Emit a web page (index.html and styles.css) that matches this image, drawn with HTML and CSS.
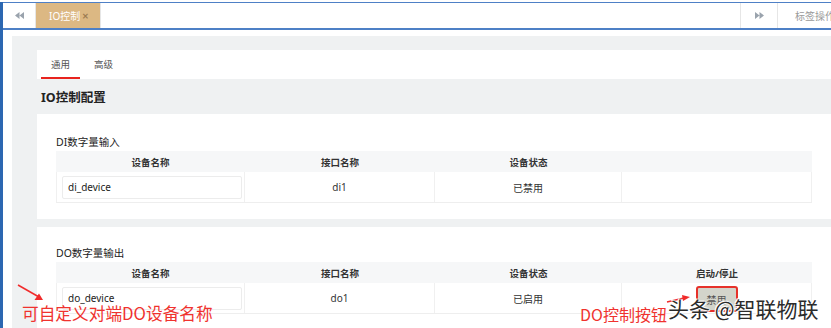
FILE: index.html
```html
<!DOCTYPE html>
<html lang="zh">
<head>
<meta charset="utf-8">
<title>IO控制</title>
<link rel="stylesheet" href="styles.css">
</head>
<body>
<div class="frame">
  <div class="tabbar">
    <div class="nav-btn nav-left">
      <svg width="9" height="7" viewBox="0 0 9 7"><path d="M4.5 0 L0 3.5 L4.5 7 Z M9 0 L4.5 3.5 L9 7 Z" fill="#9aa3ad"/></svg>
    </div>
    <div class="tab-active">IO控制 <span class="close">✕</span></div>
    <div class="tab-fill"></div>
    <div class="nav-btn nav-right">
      <svg width="9" height="7" viewBox="0 0 9 7"><path d="M0 0 L4.5 3.5 L0 7 Z M4.5 0 L9 3.5 L4.5 7 Z" fill="#9aa3ad"/></svg>
    </div>
    <div class="tab-ops">标签操作</div>
  </div>

  <div class="main">
    <div class="subtabs">
      <div class="subtab active">通用</div>
      <div class="subtab">高级</div>
    </div>
    <div class="heading">IO控制配置</div>

    <div class="card card-di">
      <div class="card-title">DI数字量输入</div>
      <div class="table">
        <div class="row head">
          <div class="cell">设备名称</div>
          <div class="cell">接口名称</div>
          <div class="cell">设备状态</div>
          <div class="cell"></div>
        </div>
        <div class="row body">
          <div class="cell"><div class="input">di_device</div></div>
          <div class="cell">di1</div>
          <div class="cell">已禁用</div>
          <div class="cell"></div>
        </div>
      </div>
    </div>

    <div class="card card-do">
      <div class="card-title">DO数字量输出</div>
      <div class="table">
        <div class="row head">
          <div class="cell">设备名称</div>
          <div class="cell">接口名称</div>
          <div class="cell">设备状态</div>
          <div class="cell">启动/停止</div>
        </div>
        <div class="row body">
          <div class="cell"><div class="input">do_device</div></div>
          <div class="cell">do1</div>
          <div class="cell">已启用</div>
          <div class="cell"><div class="btn">禁用</div></div>
        </div>
      </div>
    </div>
  </div>
</div>

<svg class="arrow1" width="30" height="20" viewBox="0 0 30 20"><path d="M1 1 L22 13" stroke="#f02b2b" stroke-width="1.6" fill="none"/><path d="M17.5 16 L26 16 L22 9.5 Z" fill="#f02b2b"/></svg>
<div class="note note1">可自定义对端DO设备名称</div>
<div class="note note2">DO控制按钮</div>
<svg class="arrow2" width="26" height="10" viewBox="0 0 26 10"><path d="M1 8 L18 4" stroke="#f02b2b" stroke-width="1.5" fill="none"/><path d="M16 1 L24 3 L17 7 Z" fill="#f02b2b"/></svg>
<div class="watermark">头条 @智联物联</div>
</body>
</html>
```

FILE: styles.css
```css
* { box-sizing: border-box; }
html, body { margin: 0; padding: 0; }
body {
  width: 831px;
  height: 328px;
  overflow: hidden;
  background: #fff;
  font-family: "Noto Sans", "Noto Sans CJK SC", sans-serif;
  color: #333;
  position: relative;
}
.frame {
  border-left: 3px solid #2c67b1;
  height: 328px;
}
.tabbar {
  margin-top: 2px;
  height: 28px;
  border-top: 1px solid #4e80c6;
  border-bottom: 2px solid #4e80c6;
  display: flex;
  align-items: stretch;
  background: #fff;
  font-size: 10px;
}
.nav-btn {
  display: flex;
  align-items: center;
  justify-content: center;
}
.nav-left { width: 33px; border-right: 1px solid #e6e6e6; }
.nav-right { width: 38px; border-left: 1px solid #e6e6e6; border-right: 1px solid #e6e6e6; }
.tab-active {
  width: 64px;
  background: #dcb883;
  color: #fff;
  display: flex;
  align-items: center;
  padding-left: 13px;
  gap: 2px;
}
.tab-active .close { font-size: 8px; color: #9c7c52; font-weight: bold; }
.tab-fill { flex: 1; border-left: 1px solid #e6e6e6; }
.tab-ops {
  width: 53px;
  color: #9a9a9a;
  padding-left: 17px;
  display: flex;
  align-items: center;
  white-space: nowrap;
  overflow: hidden;
}
.main {
  margin: 6px 0 0 9px;
  background: #eff1f2;
  padding: 14px 0 0 25px;
  height: 300px;
}
.subtabs {
  background: #fff;
  height: 29px;
  display: flex;
  padding-left: 4px;
  font-size: 9.5px;
  color: #555;
}
.subtab {
  width: 39px;
  display: flex;
  align-items: center;
  justify-content: center;
  border-bottom: 2px solid transparent;
  margin-right: 4px;
}
.subtab.active { border-bottom-color: #e8231e; }
.heading {
  height: 35px;
  display: flex;
  align-items: center;
  padding-left: 4px;
  font-size: 12.5px;
  font-weight: bold;
  color: #222;
}
.card {
  background: #fff;
  padding: 0 19px 16px 19px;
}
.card-di { padding-top: 17px; margin-bottom: 8px; }
.card-do { padding-top: 15px; }
.card-title {
  height: 20px;
  font-size: 10.5px;
  color: #222;
  display: flex;
  align-items: center;
}
.table { width: 756px; }
.row { display: grid; grid-template-columns: 189px 190px 187px 190px; }
.row.head {
  height: 21px;
  background: #f6f7f8;
  font-weight: bold;
  font-size: 9.5px;
  color: #333;
}
.row.body {
  height: 31px;
  border-bottom: 1px solid #eeeeee;
  font-size: 10px;
  color: #333;
}
.row.body .cell { border-right: 1px solid #f0f0f0; }
.row.body .cell:first-child { border-left: 1px solid #f0f0f0; }
.cell {
  display: flex;
  align-items: center;
  justify-content: center;
}
.row.body .cell:first-child { justify-content: flex-start; padding-left: 5px; }
.input {
  width: 180px;
  height: 23px;
  border: 1px solid #ececec;
  border-radius: 2px;
  display: flex;
  align-items: center;
  padding-left: 5px;
  font-size: 10px;
  color: #222;
}
.btn {
  width: 42px;
  height: 26px;
  border: 2px solid #e6312a;
  border-radius: 3px;
  background: #d3d4cb;
  display: flex;
  align-items: center;
  justify-content: center;
  font-size: 10px;
  color: #555;
  margin-top: 2px;
}
.note {
  position: absolute;
  color: #f0322e;
  white-space: nowrap;
  font-family: "Noto Sans CJK SC", sans-serif;
}
.note1 { left: 22px; top: 301px; font-size: 16.7px; }
.note2 { left: 580px; top: 302px; font-size: 16px; }
.arrow1 { position: absolute; left: 17px; top: 284px; }
.arrow2 { position: absolute; left: 666px; top: 294px; }
.watermark {
  position: absolute;
  left: 668px;
  top: 293px;
  font-size: 21px;
  color: #2b2b2b;
  white-space: nowrap;
  font-family: "Noto Sans CJK SC", sans-serif;
  text-shadow: 0 0 2px #fff, 0 0 2px #fff, 1px 1px 0 #fff, -1px -1px 0 #fff;
}
```
